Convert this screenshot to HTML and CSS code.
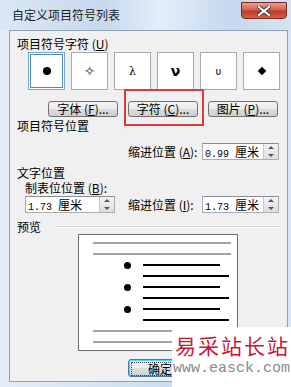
FILE: index.html
```html
<!DOCTYPE html>
<html lang="zh-CN">
<head>
    <meta charset="UTF-8">
    <title>自定义项目符号列表</title>
    <link rel="stylesheet" href="styles.css">
</head>
<body>
    <div class="window">
        <div class="titlebar">
            <span class="title">自定义项目符号列表</span>
            <span class="close">
                <svg width="14" height="10" viewBox="0 0 14 10">
                    <path d="M2 1 L12 9 M12 1 L2 9" stroke="#3a3a3a" stroke-width="4" stroke-linecap="square"/>
                    <path d="M2 1 L12 9 M12 1 L2 9" stroke="#ffffff" stroke-width="2.2" stroke-linecap="square"/>
                </svg>
            </span>
        </div>

        <div class="client">
            <div class="label">项目符号字符 (<u>U</u>)</div>
            <div class="symbols">
                <div class="sym selected"><span class="dot"></span></div>
                <div class="sym"><span class="star">✧</span></div>
                <div class="sym"><span class="greek">λ</span></div>
                <div class="sym"><span class="greek bold">ν</span></div>
                <div class="sym"><span class="greek small">υ</span></div>
                <div class="sym"><span class="diamond"></span></div>
            </div>

            <div class="buttons">
                <button class="btn">字体 (<u>F</u>)...</button>
                <button class="btn">字符 (<u>C</u>)...</button>
                <button class="btn">图片 (<u>P</u>)...</button>
            </div>

            <div class="label pos-label">项目符号位置</div>
            <div class="field-row indent-a">
                <span class="flabel">缩进位置 (<u>A</u>):</span>
                <span class="spin wide">
                    <span class="value"><span class="num">0.99</span>厘米</span>
                    <span class="arrows"><i class="up"></i><i class="down"></i></span>
                </span>
            </div>

            <div class="label text-label">文字位置</div>
            <div class="label sub">制表位位置 (<u>B</u>):</div>
            <div class="field-row tabs">
                <span class="spin first">
                    <span class="value"><span class="num">1.73</span>厘米</span>
                    <span class="arrows"><i class="up"></i><i class="down"></i></span>
                </span>
                <span class="flabel">缩进位置 (<u>I</u>):</span>
                <span class="spin wide">
                    <span class="value"><span class="num">1.73</span>厘米</span>
                    <span class="arrows"><i class="up"></i><i class="down"></i></span>
                </span>
            </div>

            <div class="preview-head">
                <span>预览</span>
                <span class="etch"></span>
            </div>
            <div class="preview">
                <div class="gline"></div>
                <div class="gline"></div>
                <div class="prow"><span class="pdot"></span><span class="bline short"></span></div>
                <div class="prow"><span class="bline long"></span></div>
                <div class="prow"><span class="pdot"></span><span class="bline short"></span></div>
                <div class="prow"><span class="bline long"></span></div>
                <div class="prow"><span class="pdot"></span><span class="bline short"></span></div>
                <div class="prow"><span class="bline long"></span></div>
                <div class="gline"></div>
                <div class="gline"></div>
            </div>

            <div class="actions">
                <button class="btn ok"><span class="focus">确定</span></button>
            </div>
        </div>

        <div class="highlight"></div>
        <div class="watermark">
            <div class="wm-title">易采站长站</div>
            <div class="wm-url">www.easck.com</div>
        </div>
    </div>
</body>
</html>
```

FILE: styles.css
```css
body {
    margin: 0;
    font-family: "Noto Sans CJK SC", sans-serif;
    font-size: 12px;
    color: #000;
}
u {
    text-decoration: underline;
}
.window {
    position: relative;
    width: 291px;
    height: 387px;
    overflow: hidden;
    background: linear-gradient(90deg, #e4edf7 0%, #d3e2f2 40%, #c9dbef 70%, #d9e6f4 100%);
    display: flex;
    flex-direction: column;
}
.titlebar {
    height: 30px;
    display: flex;
    justify-content: space-between;
    align-items: flex-start;
    padding-left: 12px;
    background: linear-gradient(90deg, #dbe7f4 0%, #c7d9ee 35%, #e3edf8 55%, #c5d8ee 80%, #d6e4f3 100%);
}
.title {
    line-height: 30px;
    color: #1b1b1b;
}
.close {
    margin-top: 2px;
    margin-right: 4px;
    width: 46px;
    height: 17px;
    box-sizing: border-box;
    border: 1px solid #7a2a22;
    border-radius: 0 0 4px 4px;
    background: linear-gradient(#e5a193 0%, #d4624d 45%, #c0392b 55%, #d2604a 100%);
    display: flex;
    align-items: center;
    justify-content: center;
}
.client {
    margin-left: 9px;
    margin-right: 3px;
    height: 352px;
    box-sizing: border-box;
    border: 1px solid #8fa2b8;
    background: #f0f0f0;
    padding: 6px 0 0 7px;
    display: flex;
    flex-direction: column;
    align-items: flex-start;
}
.label {
    line-height: 14px;
}
.symbols {
    margin-top: 1px;
    margin-left: 11px;
    display: grid;
    grid-template-columns: repeat(6, 37px);
    column-gap: 6px;
}
.sym {
    height: 38px;
    box-sizing: border-box;
    border: 1px solid #a9a9a9;
    background: #fff;
    display: flex;
    align-items: center;
    justify-content: center;
}
.sym.selected {
    box-shadow: inset 0 0 0 1px #fff, inset 0 0 0 2px #4a8cc6;
    border-color: #7fa8cc;
}
.dot {
    width: 8px;
    height: 8px;
    border-radius: 50%;
    background: #000;
}
.star {
    font-family: "DejaVu Sans", sans-serif;
    font-size: 14px;
    color: #333;
}
.greek {
    font-family: "DejaVu Serif", serif;
    font-size: 11px;
}
.greek.bold {
    font-family: "DejaVu Sans", sans-serif;
    font-weight: bold;
    font-size: 14px;
}
.greek.small {
    font-family: "DejaVu Sans", sans-serif;
    font-size: 10px;
}
.diamond {
    width: 6px;
    height: 6px;
    background: #000;
    transform: rotate(45deg);
}
.buttons {
    margin-top: 11px;
    margin-left: 31px;
    display: flex;
    gap: 10px;
}
.btn {
    height: 16px;
    width: 70px;
    padding: 0;
    box-sizing: border-box;
    border: 1px solid #707070;
    border-radius: 3px;
    background: linear-gradient(#f4f4f4 0%, #ececec 48%, #dcdcdc 52%, #d0d0d0 100%);
    font-family: "Noto Sans CJK SC", sans-serif;
    font-size: 12px;
    line-height: 14px;
    color: #000;
}
.pos-label {
    margin-top: 2px;
}
.field-row {
    display: flex;
    align-items: center;
}
.indent-a {
    margin-top: 10px;
    margin-left: 111px;
}
.flabel {
    width: 74px;
    line-height: 17px;
}
.spin {
    height: 17px;
    box-sizing: border-box;
    border: 1px solid #abadb3;
    border-top-color: #8a8d95;
    background: #fff;
    display: flex;
    justify-content: space-between;
}
.spin.wide {
    width: 77px;
}
.spin.first {
    width: 90px;
    margin-right: 13px;
}
.value {
    padding-left: 2px;
    line-height: 15px;
}
.num {
    font-family: "Liberation Mono", monospace;
    font-size: 10px;
    margin-right: 6px;
}
.arrows {
    width: 14px;
    display: flex;
    flex-direction: column;
    background: linear-gradient(#f3f3f3, #dedede);
    border-left: 1px solid #c9c9c9;
}
.arrows i {
    flex: 1;
    display: flex;
    align-items: center;
    justify-content: center;
}
.arrows i::after {
    content: "";
    border-left: 3px solid transparent;
    border-right: 3px solid transparent;
}
.arrows .up::after {
    border-bottom: 3px solid #555;
}
.arrows .down::after {
    border-top: 3px solid #555;
}
.text-label {
    margin-top: 5px;
    line-height: 15px;
}
.sub {
    margin-left: 8px;
    line-height: 15px;
}
.tabs {
    margin-top: 1px;
    margin-left: 8px;
}
.preview-head {
    margin-top: 7px;
    width: 263px;
    display: flex;
    align-items: center;
    line-height: 14px;
}
.etch {
    flex: 1;
    margin-left: 14px;
    height: 1px;
    background: #dadada;
    border-bottom: 1px solid #fff;
}
.preview {
    margin-left: 61px;
    width: 160px;
    height: 117px;
    box-sizing: border-box;
    border: 1px solid #6e6e6e;
    background: #fff;
    padding-top: 7px;
    display: flex;
    flex-direction: column;
    gap: 9px;
}
.gline {
    height: 2px;
    margin-left: 14px;
    margin-right: 6px;
    background: #a3a3a3;
}
.prow {
    height: 2px;
    display: flex;
    align-items: center;
    padding-left: 45px;
}
.pdot {
    width: 7px;
    height: 7px;
    border-radius: 50%;
    background: #000;
    margin-right: 12px;
}
.bline {
    height: 2px;
    background: #000;
}
.bline.short {
    width: 77px;
}
.bline.long {
    margin-left: 19px;
    width: 86px;
}
.actions {
    margin-top: 8px;
    margin-left: 111px;
    display: flex;
}
.actions .btn {
    height: 18px;
    width: 64px;
}
.btn.ok {
    border-color: #3c7fb1;
    box-shadow: inset 0 0 0 1px #48d7f8;
    padding: 2px;
}
.focus {
    display: block;
    height: 12px;
    line-height: 12px;
    border: 1px dotted #444;
}
.highlight {
    position: absolute;
    left: 124px;
    top: 89px;
    width: 80px;
    height: 37px;
    box-sizing: border-box;
    border: 2px solid #dd3b3b;
}
.watermark {
    position: absolute;
    left: 172px;
    top: 327px;
    width: 119px;
    height: 60px;
    background: #fff;
    display: flex;
    flex-direction: column;
    align-items: center;
}
.wm-title {
    margin-top: 5px;
    font-size: 21px;
    line-height: 26px;
    letter-spacing: 2px;
    color: #c8163a;
    padding-left: 2px;
}
.wm-url {
    font-family: "Liberation Mono", monospace;
    font-size: 15px;
    line-height: 22px;
    color: #8a8a8a;
}
```
